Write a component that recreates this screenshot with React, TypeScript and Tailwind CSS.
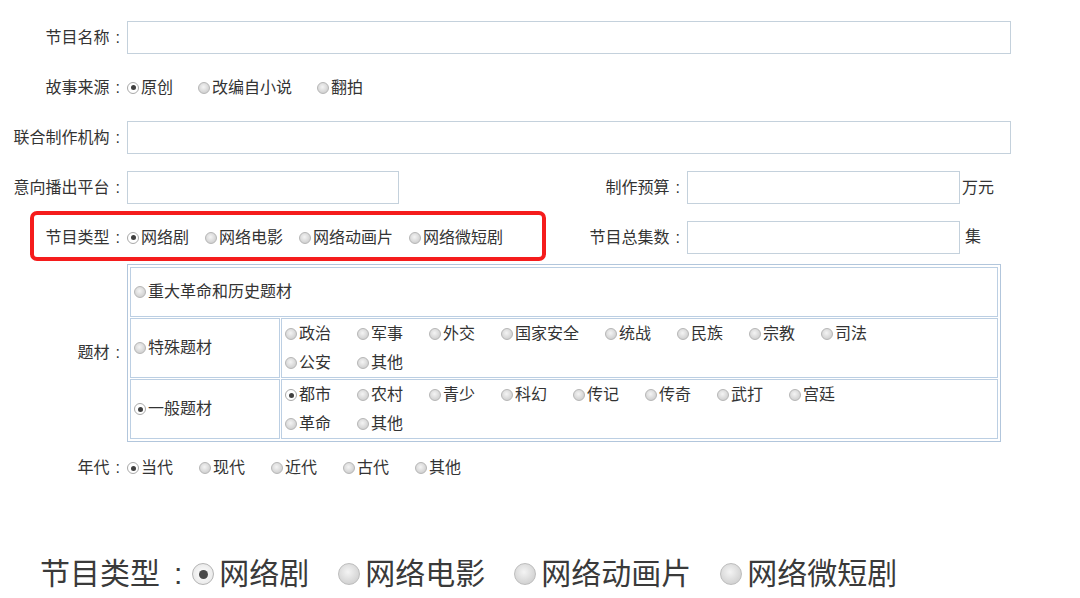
import React from "react";

const FONT = '"Liberation Sans", "Noto Sans CJK SC", sans-serif';

function Radio({ checked = false, big = false }: { checked?: boolean; big?: boolean }) {
  if (big) {
    return checked ? (
      <span className="w-[22px] h-[22px] rounded-full border border-[#b4b4b4] bg-[radial-gradient(circle_at_50%_50%,#ffffff,#e2e2e2)] flex items-center justify-center shrink-0">
        <span className="w-[9px] h-[9px] rounded-full bg-[#4a4a4a]" />
      </span>
    ) : (
      <span className="w-[22px] h-[22px] rounded-full border border-[#bdbdbd] bg-[radial-gradient(circle_at_45%_40%,#f4f4f4,#c6c6c6)] shrink-0" />
    );
  }
  return checked ? (
    <span className="w-[12px] h-[12px] rounded-full border border-[#a9a9a9] bg-white flex items-center justify-center shrink-0">
      <span className="w-[5px] h-[5px] rounded-full bg-[#3f3f3f]" />
    </span>
  ) : (
    <span className="w-[12px] h-[12px] rounded-full border border-[#b6b6b6] bg-[radial-gradient(circle_at_45%_40%,#f4f4f4,#c4c4c4)] shrink-0" />
  );
}

function Opt({ label, checked = false }: { label: string; checked?: boolean }) {
  return (
    <span className="flex items-center gap-[2px] whitespace-nowrap">
      <Radio checked={checked} />
      <span>{label}</span>
    </span>
  );
}

function Label({ text, w = "w-[127px]" }: { text: string; w?: string }) {
  return (
    <div className={`${w} shrink-0 flex justify-end items-center whitespace-nowrap`}>
      <span>{text}</span>
      <span className="ml-[6px] mr-[7px]">:</span>
    </div>
  );
}

function Input({ w }: { w: string }) {
  return <div className={`${w} h-full border border-[#c4d1dc] bg-white shrink-0`} />;
}

export default function App() {
  return (
    <div
      className="w-[1080px] h-[598px] bg-white overflow-hidden text-[16px] text-[#333333] leading-none"
      style={{ fontFamily: FONT }}
    >
      <div className="pt-[21px] flex flex-col">
        {/* 节目名称 */}
        <div className="flex items-center h-[33px]">
          <Label text="节目名称" />
          <Input w="w-[884px]" />
        </div>

        {/* 故事来源 */}
        <div className="flex items-center h-[67px]">
          <Label text="故事来源" />
          <div className="flex items-center gap-[25px]">
            <Opt label="原创" checked />
            <Opt label="改编自小说" />
            <Opt label="翻拍" />
          </div>
        </div>

        {/* 联合制作机构 */}
        <div className="flex items-center h-[33px]">
          <Label text="联合制作机构" />
          <Input w="w-[884px]" />
        </div>

        {/* 意向播出平台 / 制作预算 */}
        <div className="flex items-center h-[33px] mt-[17px]">
          <Label text="意向播出平台" />
          <Input w="w-[272px]" />
          <Label text="制作预算" w="w-[288px]" />
          <Input w="w-[273px]" />
          <span className="ml-[2px]">万元</span>
        </div>

        {/* 节目类型 / 节目总集数 */}
        <div className="relative flex items-center h-[33px] mt-[17px]">
          <Label text="节目类型" />
          <div className="w-[440px] shrink-0 flex items-center gap-[16px]">
            <Opt label="网络剧" checked />
            <Opt label="网络电影" />
            <Opt label="网络动画片" />
            <Opt label="网络微短剧" />
          </div>
          <Label text="节目总集数" w="w-[120px]" />
          <Input w="w-[273px]" />
          <span className="ml-[5px] self-start mt-[8px]">集</span>
          <div className="absolute left-[30px] top-[-10px] w-[516px] h-[50px] border-[4px] border-[#f51c1c] rounded-[7px] pointer-events-none" />
        </div>

        {/* 题材 */}
        <div className="flex mt-[10px]">
          <Label text="题材" />
          <div className="w-[874px] h-[178px] border border-[#b2c6dc] p-[2px] flex flex-col gap-[1px]">
            <div className="h-[50px] border border-[#bccfe3] flex items-center pl-[3px]">
              <Opt label="重大革命和历史题材" />
            </div>
            <div className="h-[60px] flex gap-[1px]">
              <div className="w-[150px] border border-[#bccfe3] flex items-center pl-[3px]">
                <Opt label="特殊题材" />
              </div>
              <div className="flex-1 border border-[#bccfe3] pl-[3px] pt-[1px] flex flex-col">
                <div className="h-[29px] flex items-center gap-[26px]">
                  <Opt label="政治" />
                  <Opt label="军事" />
                  <Opt label="外交" />
                  <Opt label="国家安全" />
                  <Opt label="统战" />
                  <Opt label="民族" />
                  <Opt label="宗教" />
                  <Opt label="司法" />
                </div>
                <div className="h-[29px] flex items-center gap-[26px]">
                  <Opt label="公安" />
                  <Opt label="其他" />
                </div>
              </div>
            </div>
            <div className="h-[60px] flex gap-[1px]">
              <div className="w-[150px] border border-[#bccfe3] flex items-center pl-[3px]">
                <Opt label="一般题材" checked />
              </div>
              <div className="flex-1 border border-[#bccfe3] pl-[3px] pt-[1px] flex flex-col">
                <div className="h-[29px] flex items-center gap-[26px]">
                  <Opt label="都市" checked />
                  <Opt label="农村" />
                  <Opt label="青少" />
                  <Opt label="科幻" />
                  <Opt label="传记" />
                  <Opt label="传奇" />
                  <Opt label="武打" />
                  <Opt label="宫廷" />
                </div>
                <div className="h-[29px] flex items-center gap-[26px]">
                  <Opt label="革命" />
                  <Opt label="其他" />
                </div>
              </div>
            </div>
          </div>
        </div>

        {/* 年代 */}
        <div className="flex items-center h-[52px]">
          <Label text="年代" />
          <div className="flex items-center gap-[26px]">
            <Opt label="当代" checked />
            <Opt label="现代" />
            <Opt label="近代" />
            <Opt label="古代" />
            <Opt label="其他" />
          </div>
        </div>

        {/* 放大示意 */}
        <div className="flex items-center h-[40px] mt-[60px] pl-[40px] text-[30px] text-[#3a3a3a]">
          <span>节目类型</span>
          <span className="ml-[14px] mr-[10px]">:</span>
          <div className="flex items-center gap-[29px]">
            <span className="flex items-center gap-[5px]">
              <Radio big checked />
              <span>网络剧</span>
            </span>
            <span className="flex items-center gap-[5px]">
              <Radio big />
              <span>网络电影</span>
            </span>
            <span className="flex items-center gap-[5px]">
              <Radio big />
              <span>网络动画片</span>
            </span>
            <span className="flex items-center gap-[5px]">
              <Radio big />
              <span>网络微短剧</span>
            </span>
          </div>
        </div>
      </div>
    </div>
  );
}
